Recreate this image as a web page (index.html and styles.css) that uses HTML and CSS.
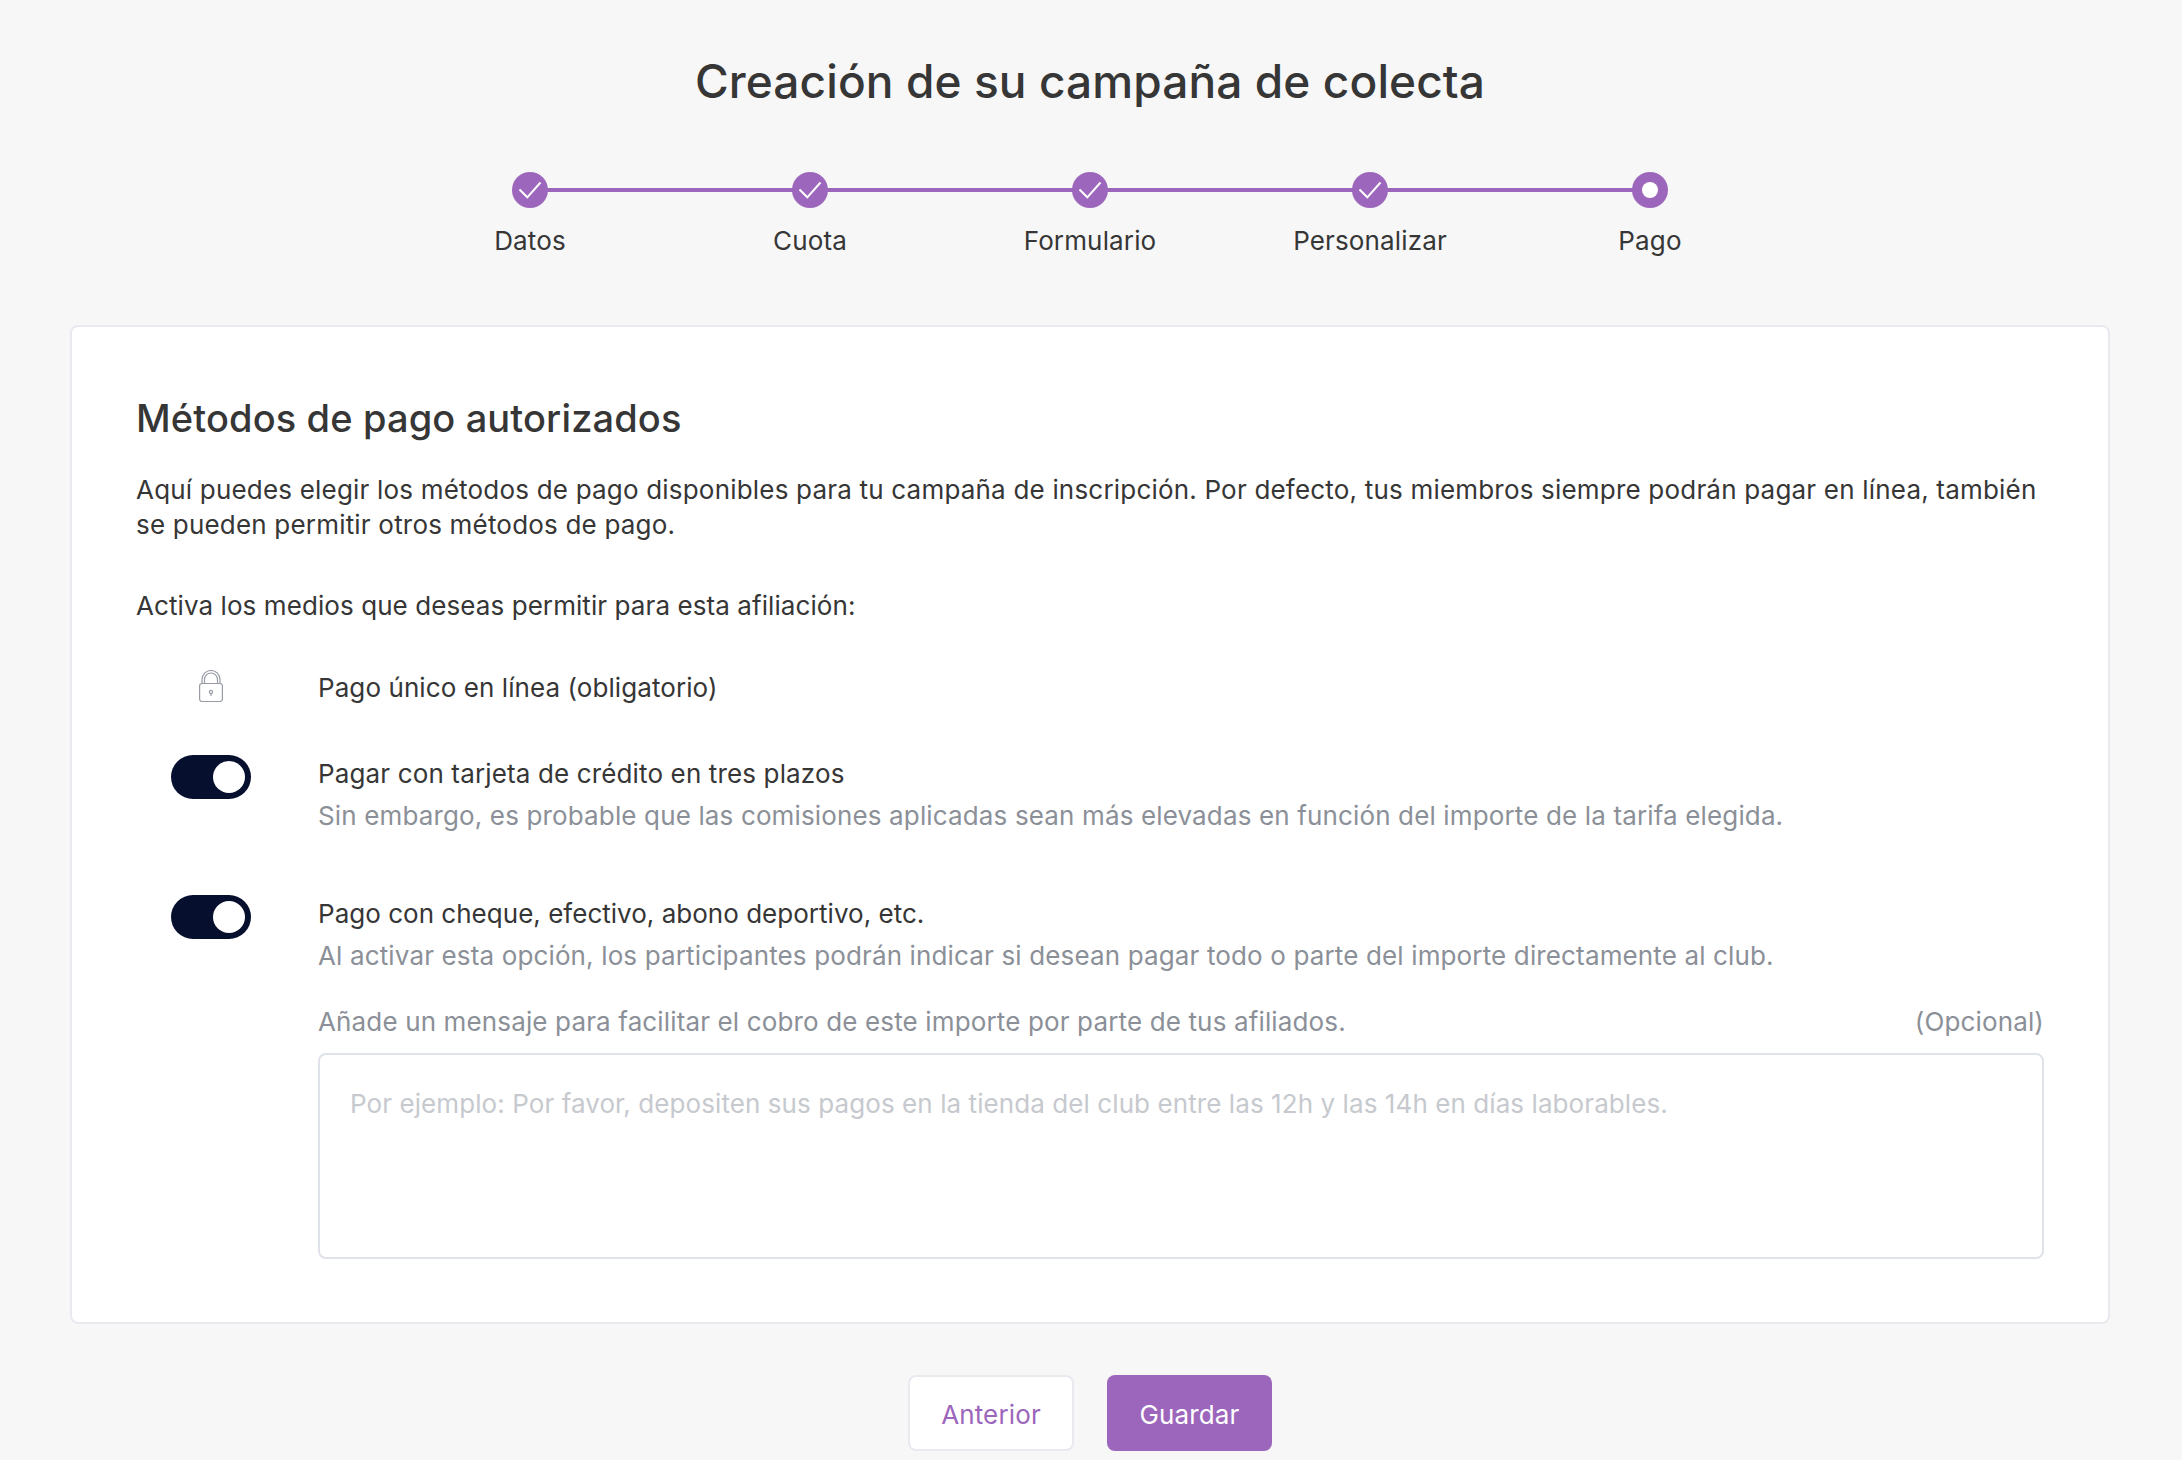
FILE: index.html
```html
<!DOCTYPE html>
<html lang="es">
<head>
<meta charset="utf-8">
<title>Creación de su campaña de colecta</title>
<link rel="stylesheet" href="styles.css">
</head>
<body>
<main class="page">
  <h1 class="title">Creación de su campaña de colecta</h1>
  <ol class="steps">
    <li class="step done"><span class="dot"><svg class="check" viewBox="0 0 36 36"><path d="M7.5 17.5l7.8 7.8L28.5 10.5"/></svg></span><span class="step-label">Datos</span></li>
    <li class="step done"><span class="dot"><svg class="check" viewBox="0 0 36 36"><path d="M7.5 17.5l7.8 7.8L28.5 10.5"/></svg></span><span class="step-label">Cuota</span></li>
    <li class="step done"><span class="dot"><svg class="check" viewBox="0 0 36 36"><path d="M7.5 17.5l7.8 7.8L28.5 10.5"/></svg></span><span class="step-label">Formulario</span></li>
    <li class="step done"><span class="dot"><svg class="check" viewBox="0 0 36 36"><path d="M7.5 17.5l7.8 7.8L28.5 10.5"/></svg></span><span class="step-label">Personalizar</span></li>
    <li class="step current"><span class="dot"><span class="inner"></span></span><span class="step-label">Pago</span></li>
  </ol>
  <section class="card">
    <h2 class="card-title">Métodos de pago autorizados</h2>
    <p class="intro">Aquí puedes elegir los métodos de pago disponibles para tu campaña de inscripción. Por defecto, tus miembros siempre podrán pagar en línea, también se pueden permitir otros métodos de pago.</p>
    <p class="lead">Activa los medios que deseas permitir para esta afiliación:</p>
    <div class="option option-lock">
      <div class="control">
        <svg class="lock" viewBox="0 0 24 32"><rect x=".6" y="13.5" width="22.8" height="18" rx="2.5"/><path d="M3 13.5V9.5a9 9 0 0 1 18 0v4M5.5 13.5V9.5a6.5 6.5 0 0 1 13 0v4"/><circle cx="12" cy="22" r="1.6"/><path d="M12 23.6V26"/></svg>
      </div>
      <div class="option-body"><div class="option-title tight">Pago único en línea (obligatorio)</div></div>
    </div>
    <div class="option option-first">
      <div class="control"><span class="toggle"><span class="knob"></span></span></div>
      <div class="option-body">
        <div class="option-title">Pagar con tarjeta de crédito en tres plazos</div>
        <div class="option-note">Sin embargo, es probable que las comisiones aplicadas sean más elevadas en función del importe de la tarifa elegida.</div>
      </div>
    </div>
    <div class="option option-second">
      <div class="control"><span class="toggle"><span class="knob"></span></span></div>
      <div class="option-body">
        <div class="option-title tighter">Pago con cheque, efectivo, abono deportivo, etc.</div>
        <div class="option-note">Al activar esta opción, los participantes podrán indicar si desean pagar todo o parte del importe directamente al club.</div>
        <div class="field-head"><span>Añade un mensaje para facilitar el cobro de este importe por parte de tus afiliados.</span><span>(Opcional)</span></div>
        <textarea class="message" placeholder="Por ejemplo: Por favor, depositen sus pagos en la tienda del club entre las 12h y las 14h en días laborables."></textarea>
      </div>
    </div>
  </section>
  <div class="actions">
    <button class="btn btn-ghost" type="button">Anterior</button>
    <button class="btn btn-primary" type="button">Guardar</button>
  </div>
</main>
</body>
</html>
```
FILE: styles.css
```css
* { box-sizing: border-box; }
html, body { margin: 0; height: 100%; }
body {
  background: #f7f7f7;
  color: #363636;
  font-family: Inter, "Liberation Sans", sans-serif;
  font-size: 26px;
  letter-spacing: .14px;
  line-height: 35px;
  overflow: hidden;
}
.page { padding: 50px 72px 0 70px; }
.title {
  margin: 0;
  text-align: center;
  font-size: 46px;
  letter-spacing: .1px;
  line-height: 62px;
  font-weight: 500;
  color: #363636;
}
.steps {
  list-style: none;
  margin: 60px 0 0;
  padding: 0;
  display: flex;
  justify-content: center;
}
.step {
  position: relative;
  width: 280px;
  display: flex;
  flex-direction: column;
  align-items: center;
}
.step:not(:last-child)::after {
  content: "";
  position: absolute;
  top: 16px;
  left: 50%;
  width: 100%;
  height: 4px;
  background: #9c66bc;
}
.dot {
  position: relative;
  z-index: 1;
  width: 36px;
  height: 36px;
  border-radius: 50%;
  background: #9c66bc;
  display: flex;
  align-items: center;
  justify-content: center;
}
.check { width: 36px; height: 36px; fill: none; stroke: #fff; stroke-width: 2; }
.inner { width: 16px; height: 16px; border-radius: 50%; background: #fff; }
.step-label { margin-top: 15px; line-height: 36px; white-space: nowrap; }
.card {
  margin-top: 66px;
  height: 999px;
  padding: 66px 64px 0;
  background: #fff;
  border: 2px solid #e8eaef;
  border-radius: 8px;
}
.card-title {
  margin: 0;
  font-size: 38px;
  letter-spacing: .13px;
  line-height: 50px;
  font-weight: 500;
  color: #363636;
}
.intro { margin: 29px 0 0; letter-spacing: .195px; }
.lead { margin: 46px 0 0; letter-spacing: .08px; }
.option { display: flex; gap: 32px; }
.control { width: 150px; flex: none; display: flex; justify-content: center; }
.option-body { flex: 1; min-width: 0; }
.option-lock { margin-top: 47px; align-items: center; }
.option-first { margin-top: 51px; }
.option-second { margin-top: 63px; }
.tight { letter-spacing: .08px; }
.tighter { letter-spacing: .02px; }
.lock { width: 24px; height: 32px; margin-top: -4px; fill: none; stroke: #979ca5; stroke-width: 1.2; }
.toggle {
  display: flex;
  align-items: center;
  justify-content: flex-end;
  width: 80px;
  height: 44px;
  margin-top: -1px;
  padding-right: 6px;
  border-radius: 22px;
  background: #06102e;
}
.knob { width: 32px; height: 32px; border-radius: 50%; background: #fff; }
.option-note { margin-top: 7px; color: #8b9098; }
.field-head {
  display: flex;
  justify-content: space-between;
  margin-top: 31px;
  color: #8b9098;
}
.message {
  display: block;
  width: 100%;
  height: 206px;
  margin-top: 14px;
  padding: 31px 30px;
  border: 2px solid #dfe2e8;
  border-radius: 8px;
  background: #fff;
  font: inherit;
  letter-spacing: .08px;
  color: #363636;
  resize: none;
}
.message::placeholder { color: #c6c9ce; opacity: 1; }
.actions { display: flex; justify-content: center; gap: 33px; margin-top: 51px; }
.btn {
  height: 76px;
  width: 166px;
  padding: 2px 0 0;
  border-radius: 8px;
  font: inherit;
  letter-spacing: inherit;
}
.btn-ghost { background: #fff; border: 2px solid #e8eaef; color: #9c66bc; }
.btn-primary { background: #9c66bc; border: 0; color: #fff; width: 165px; }
```
